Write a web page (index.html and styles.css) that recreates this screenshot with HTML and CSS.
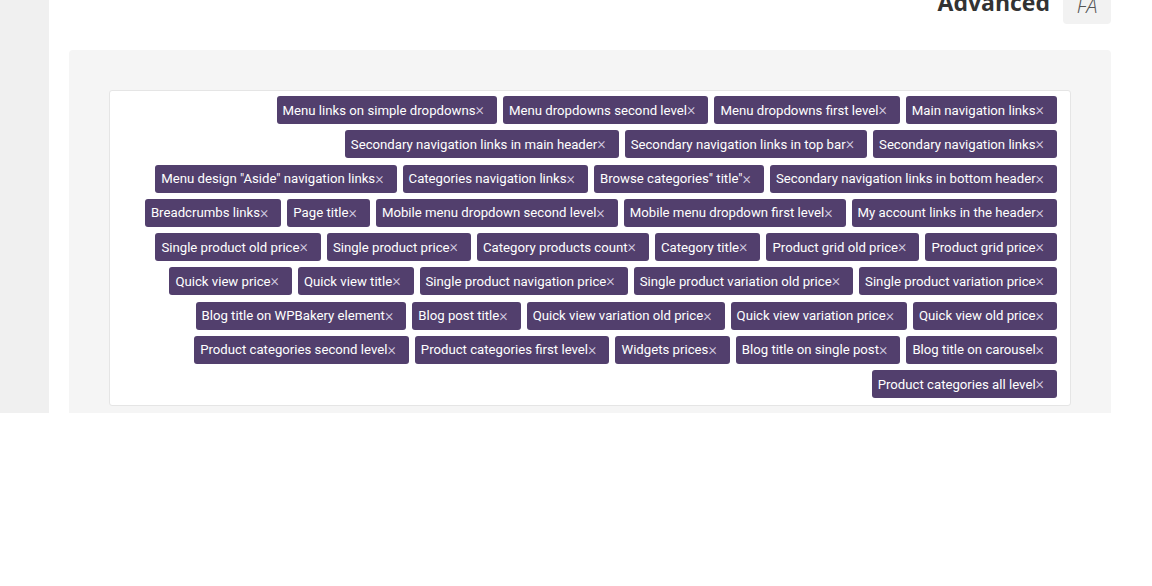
FILE: index.html
```html
<!DOCTYPE html>
<html>
<head>
<meta charset="utf-8">
<link rel="stylesheet" href="styles.css">
</head>
<body>
<div class="layout">
  <aside class="sidebar"></aside>
  <main class="main">
    <div class="header">
      <h2 class="title">Advanced</h2>
      <div class="fa-btn">FA</div>
    </div>
    <section class="panel">
      <div class="tagbox">
        <span class="tag">Menu links on simple dropdowns<span class="x">×</span></span>
        <span class="tag">Menu dropdowns second level<span class="x">×</span></span>
        <span class="tag">Menu dropdowns first level<span class="x">×</span></span>
        <span class="tag">Main navigation links<span class="x">×</span></span>
        <span class="tag">Secondary navigation links in main header<span class="x">×</span></span>
        <span class="tag">Secondary navigation links in top bar<span class="x">×</span></span>
        <span class="tag">Secondary navigation links<span class="x">×</span></span>
        <span class="tag">Menu design "Aside" navigation links<span class="x">×</span></span>
        <span class="tag">Categories navigation links<span class="x">×</span></span>
        <span class="tag">Browse categories" title"<span class="x">×</span></span>
        <span class="tag">Secondary navigation links in bottom header<span class="x">×</span></span>
        <span class="tag">Breadcrumbs links<span class="x">×</span></span>
        <span class="tag">Page title<span class="x">×</span></span>
        <span class="tag">Mobile menu dropdown second level<span class="x">×</span></span>
        <span class="tag">Mobile menu dropdown first level<span class="x">×</span></span>
        <span class="tag">My account links in the header<span class="x">×</span></span>
        <span class="tag">Single product old price<span class="x">×</span></span>
        <span class="tag">Single product price<span class="x">×</span></span>
        <span class="tag">Category products count<span class="x">×</span></span>
        <span class="tag">Category title<span class="x">×</span></span>
        <span class="tag">Product grid old price<span class="x">×</span></span>
        <span class="tag">Product grid price<span class="x">×</span></span>
        <span class="tag">Quick view price<span class="x">×</span></span>
        <span class="tag">Quick view title<span class="x">×</span></span>
        <span class="tag">Single product navigation price<span class="x">×</span></span>
        <span class="tag">Single product variation old price<span class="x">×</span></span>
        <span class="tag">Single product variation price<span class="x">×</span></span>
        <span class="tag">Blog title on WPBakery element<span class="x">×</span></span>
        <span class="tag">Blog post title<span class="x">×</span></span>
        <span class="tag">Quick view variation old price<span class="x">×</span></span>
        <span class="tag">Quick view variation price<span class="x">×</span></span>
        <span class="tag">Quick view old price<span class="x">×</span></span>
        <span class="tag">Product categories second level<span class="x">×</span></span>
        <span class="tag">Product categories first level<span class="x">×</span></span>
        <span class="tag">Widgets prices<span class="x">×</span></span>
        <span class="tag">Blog title on single post<span class="x">×</span></span>
        <span class="tag">Blog title on carousel<span class="x">×</span></span>
        <span class="tag">Product categories all level<span class="x">×</span></span>
      </div>
    </section>
  </main>
</div>
</body>
</html>
```
FILE: styles.css
```css
html, body {
  margin: 0;
  padding: 0;
  background: #fff;
}
.layout {
  display: flex;
  height: 413px;
  overflow: hidden;
}
.sidebar {
  width: 49px;
  flex: none;
  background: #f0f0f0;
}
.main {
  flex: 1;
  padding: 0 41px 0 20px;
  display: flex;
  flex-direction: column;
}
.header {
  display: flex;
  justify-content: flex-end;
  align-items: center;
  gap: 13px;
  height: 48px;
  margin-top: -24px;
  margin-bottom: 26px;
}
.title {
  margin: 0;
  font-family: "Open Sans", sans-serif;
  font-weight: 700;
  font-size: 23px;
  color: #333;
  line-height: 48px;
  position: relative;
  top: 2px;
}
.fa-btn {
  width: 48px;
  height: 48px;
  background: #f2f2f2;
  border-radius: 4px;
  display: flex;
  align-items: center;
  justify-content: center;
  font-family: "Open Sans", sans-serif;
  font-style: italic;
  font-weight: 300;
  font-size: 20px;
  color: #555;
  box-sizing: border-box;
  padding-top: 10px;
}
.panel {
  flex: 1;
  background: #f5f5f5;
  border-radius: 4px 4px 0 0;
  padding: 40px 40px 7px;
}
.tagbox {
  background: #fff;
  border: 1px solid #e5e5e5;
  border-radius: 3px;
  padding: 5px 13px 7px;
  display: flex;
  flex-wrap: wrap;
  justify-content: flex-end;
  gap: 6.25px 6px;
}
.tag {
  display: inline-flex;
  align-items: center;
  height: 28px;
  padding: 0 13px 0 6px;
  background: #523f6d;
  border-radius: 3px;
  color: #fff;
  font-family: Roboto, sans-serif;
  font-size: 13.2px;
  white-space: nowrap;
}
.x {
  color: #d6cfe2;
  font-size: 16px;
  line-height: 1;
  font-weight: 300;
}
```
